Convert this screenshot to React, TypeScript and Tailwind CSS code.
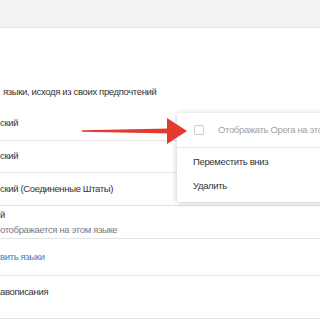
import React from "react";

export default function App() {
  const main = { fontFamily: '"Liberation Sans", Arial, sans-serif' };
  return (
    <div className="relative w-[320px] h-[320px] overflow-hidden bg-white tracking-[-0.35px]" style={main}>
      <div className="h-[28px] bg-[#f3f3f5] border-b border-[#e6e6ea]" />
      <div className="pt-[56px]">
        <div className="h-[16px] leading-[16px] text-[9.5px] text-[#333] pl-[3px] whitespace-nowrap">
          языки, исходя из своих предпочтений
        </div>
        <div className="h-[7px]" />
        <div className="h-[34px] flex items-center border-b border-[#e4e4e4] text-[9.5px] text-[#333] whitespace-nowrap">
          ский
        </div>
        <div className="h-[32px] flex items-center border-b border-[#e4e4e4] text-[9.5px] text-[#333] whitespace-nowrap">
          ский
        </div>
        <div className="h-[33px] flex items-center border-b border-[#e4e4e4] text-[9.5px] text-[#333] whitespace-nowrap">
          ский (Соединенные Штаты)
        </div>
        <div className="h-[33px] flex flex-col justify-center border-b border-[#e4e4e4] text-[9.5px] whitespace-nowrap">
          <div className="leading-[15px] text-[#333]">й</div>
          <div className="leading-[15px] text-[#7a7a7a]">отображается на этом языке</div>
        </div>
        <div className="h-[37px] flex items-center border-b border-[#e4e4e4] text-[9.5px] text-[#2f7fc8] whitespace-nowrap">
          вить языки
        </div>
        <div className="h-[43px] pt-[8px] border-b border-[#e4e4e4] text-[9.5px] text-[#333] whitespace-nowrap">
          <div className="leading-[16px]">авописания</div>
        </div>
      </div>

      {/* popup menu */}
      <div className="absolute left-[177px] top-[113px] w-[170px] bg-white rounded-[3px] shadow-[0_1px_6px_rgba(0,0,0,0.22)] text-[9.5px] whitespace-nowrap">
        <div className="h-[35px] flex items-center pl-[17px] border-b border-[#e8e8e8]">
          <div className="w-[10px] h-[10px] shrink-0 border border-[#cfcfcf] rounded-[1px] bg-white" />
          <span className="ml-[14px] text-[#a2a2a2]">Отображать Opera на этом языке</span>
        </div>
        <div className="pt-[2px] pb-[4px]">
          <div className="h-[24px] flex items-center pl-[16px] text-[#333]">Переместить вниз</div>
          <div className="h-[24px] flex items-center pl-[16px] text-[#333]">Удалить</div>
        </div>
      </div>

      {/* red arrow */}
      <svg className="absolute left-0 top-0" width="320" height="320" viewBox="0 0 320 320">
        <path d="M82 130.2 L170 128.6 L170 133.4 L82 131.8 Z" fill="#e23a2e" />
        <path d="M167 118 L187 131 L167 144 Z" fill="#e23a2e" />
      </svg>
    </div>
  );
}
